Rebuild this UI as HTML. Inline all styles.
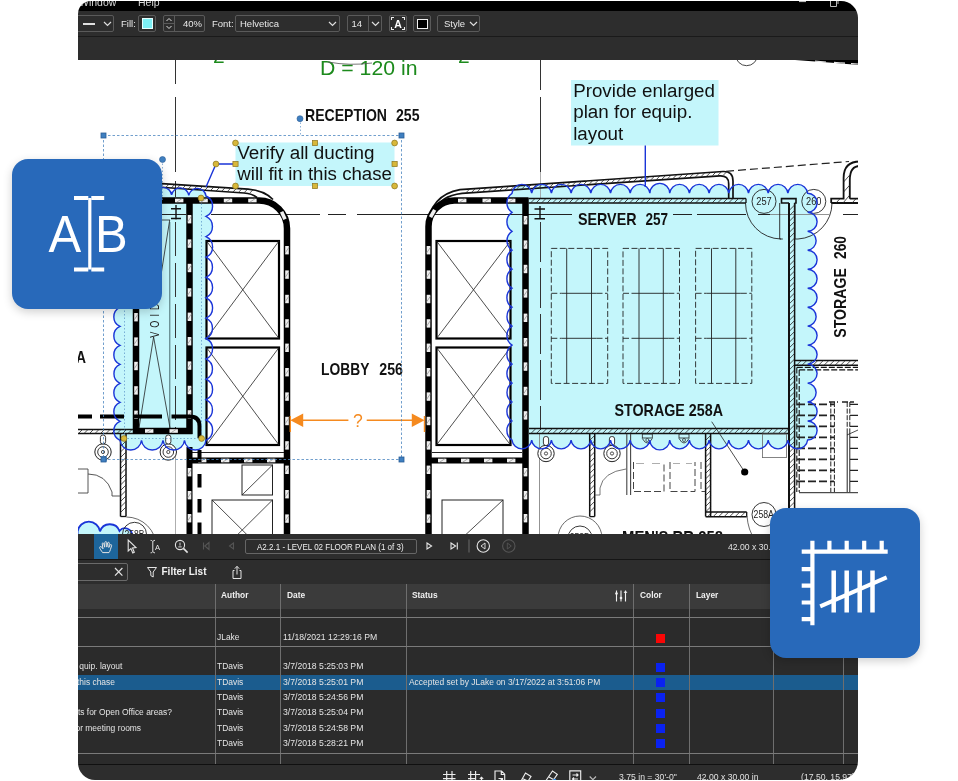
<!DOCTYPE html><html lang="en"><head><meta charset="utf-8"><title>Floor plan markup</title><style>
*{box-sizing:border-box;margin:0;padding:0}
html,body{width:958px;height:781px;background:#fff;overflow:hidden}
body{font-family:"Liberation Sans",sans-serif;position:relative;color:#e6e6e6}
#win{will-change:transform;position:absolute;left:78px;top:1px;width:780px;height:779px;overflow:hidden;border-radius:13px 17px 19px 17px;background:#fff}
#inner{position:absolute;left:0;top:-1px;width:780px;height:781px}
#drawing{position:absolute;left:-78px;top:0;width:958px;height:781px;font-family:"Liberation Sans",sans-serif}
.abs{position:absolute}
#titlebar{left:0;top:0;width:780px;height:11px;background:#000}
#tb1{left:0;top:11px;width:780px;height:25px;background:#2d2d2d}
#tbline{left:0;top:36px;width:780px;height:1px;background:#1a1a1a}
#tb2{left:0;top:37px;width:780px;height:23px;background:#2d2d2d}
.box{position:absolute;top:4px;height:17px;border:1px solid #5a5a5a;border-radius:2px}
.lbl{position:absolute;font-size:9.5px;line-height:12px;color:#e8e8e8;white-space:nowrap}
#nav{left:0;top:534px;width:780px;height:25px;background:#2d2d2d}
#navline{left:0;top:559px;width:780px;height:1px;background:#151515}
#flt{left:0;top:560px;width:780px;height:24px;background:#2d2d2d}
#tbl{left:0;top:584px;width:780px;height:180px;background:#2b2b2b}
#thead{left:0;top:0;width:780px;height:25px;background:#3b3b3b}
.hl{position:absolute;left:0;width:780px;height:1px;background:#7a7a7a}
.vl{position:absolute;top:0;width:1px;height:180px;background:#6e6e6e}
.th{position:absolute;top:6px;font-size:9px;font-weight:bold;color:#f0f0f0;line-height:11px;transform:scaleX(.93);transform-origin:0 0}
.td{position:absolute;font-size:8.9px;color:#e4e4e4;line-height:11px;white-space:nowrap;transform:scaleX(.95);transform-origin:0 0}
.tdr{transform-origin:100% 0}
.sq{position:absolute;left:578px;width:9px;height:9px;background:#0a22f0}
#selrow{left:0;top:91px;width:780px;height:15px;background:#1b5c8e}
#status{left:0;top:764px;width:780px;height:17px;background:#2d2d2d;border-top:1px solid #101010}
.card{position:absolute;width:150px;height:150px;border-radius:16px;background:#2869ba;box-shadow:0 3px 10px rgba(0,0,0,.19)}
</style></head><body>
<div id="win"><div id="inner">
<svg id="drawing" viewBox="0 0 958 781" width="958" height="781"><path d="M120.0 193.5A8.7 8.7 0 0 1 137.2 194.0A8.7 8.7 0 0 1 154.4 194.5A8.7 8.7 0 0 1 171.6 195.0A8.7 8.7 0 0 1 188.8 195.5A8.7 8.7 0 0 1 206.0 196.0A11.2 11.2 0 0 1 206.0 216.4A11.2 11.2 0 0 1 206.0 236.7A11.2 11.2 0 0 1 206.0 257.1A11.2 11.2 0 0 1 206.0 277.4A11.2 11.2 0 0 1 206.0 297.8A11.2 11.2 0 0 1 206.0 318.2A11.2 11.2 0 0 1 206.0 338.5A11.2 11.2 0 0 1 206.0 358.9A11.2 11.2 0 0 1 206.0 379.2A11.2 11.2 0 0 1 206.0 399.6A11.2 11.2 0 0 1 206.0 419.9A11.2 11.2 0 0 1 206.0 440.3A10.8 10.8 0 0 1 184.5 440.3A10.8 10.8 0 0 1 163.0 440.3A10.8 10.8 0 0 1 141.5 440.3A10.8 10.8 0 0 1 120.0 440.3A10.4 10.4 0 0 1 120.0 421.3A10.4 10.4 0 0 1 120.0 402.3A10.4 10.4 0 0 1 120.0 383.3A10.4 10.4 0 0 1 120.0 364.4A10.4 10.4 0 0 1 120.0 345.4A10.4 10.4 0 0 1 120.0 326.4A10.4 10.4 0 0 1 120.0 307.4A10.4 10.4 0 0 1 120.0 288.4A10.4 10.4 0 0 1 120.0 269.4A10.4 10.4 0 0 1 120.0 250.5A10.4 10.4 0 0 1 120.0 231.5A10.4 10.4 0 0 1 120.0 212.5A10.4 10.4 0 0 1 120.0 193.5Z" fill="#c4f6fb"/>
<path d="M512.0 193.3A9.9 9.9 0 0 1 531.7 193.3A9.9 9.9 0 0 1 551.4 193.3A9.9 9.9 0 0 1 571.1 193.3A9.9 9.9 0 0 1 590.8 193.3A9.9 9.9 0 0 1 610.5 193.3A9.9 9.9 0 0 1 630.2 193.3A9.9 9.9 0 0 1 649.9 193.3A9.9 9.9 0 0 1 669.7 193.3A9.9 9.9 0 0 1 689.4 193.3A9.9 9.9 0 0 1 709.1 193.3A9.9 9.9 0 0 1 728.8 193.3A9.9 9.9 0 0 1 748.5 193.3A9.9 9.9 0 0 1 768.2 193.3A9.9 9.9 0 0 1 787.9 193.3A9.9 9.9 0 0 1 807.6 193.3A9.5 9.5 0 0 1 807.6 212.3A9.5 9.5 0 0 1 807.6 231.3A9.5 9.5 0 0 1 807.6 250.2A9.5 9.5 0 0 1 807.6 269.2A9.5 9.5 0 0 1 807.6 288.2A9.5 9.5 0 0 1 807.6 307.2A9.5 9.5 0 0 1 807.6 326.1A9.5 9.5 0 0 1 807.6 345.1A9.5 9.5 0 0 1 807.6 364.1A9.5 9.5 0 0 1 807.6 383.1A9.5 9.5 0 0 1 807.6 402.0A9.5 9.5 0 0 1 807.6 421.0A9.5 9.5 0 0 1 807.6 440.0A9.9 9.9 0 0 1 787.9 440.0A9.9 9.9 0 0 1 768.2 440.0A9.9 9.9 0 0 1 748.5 440.0A9.9 9.9 0 0 1 728.8 440.0A9.9 9.9 0 0 1 709.1 440.0A9.9 9.9 0 0 1 689.4 440.0A9.9 9.9 0 0 1 669.7 440.0A9.9 9.9 0 0 1 649.9 440.0A9.9 9.9 0 0 1 630.2 440.0A9.9 9.9 0 0 1 610.5 440.0A9.9 9.9 0 0 1 590.8 440.0A9.9 9.9 0 0 1 571.1 440.0A9.9 9.9 0 0 1 551.4 440.0A9.9 9.9 0 0 1 531.7 440.0A9.9 9.9 0 0 1 512.0 440.0A11.4 11.4 0 0 1 512.0 421.0A11.4 11.4 0 0 1 512.0 402.0A11.4 11.4 0 0 1 512.0 383.1A11.4 11.4 0 0 1 512.0 364.1A11.4 11.4 0 0 1 512.0 345.1A11.4 11.4 0 0 1 512.0 326.1A11.4 11.4 0 0 1 512.0 307.2A11.4 11.4 0 0 1 512.0 288.2A11.4 11.4 0 0 1 512.0 269.2A11.4 11.4 0 0 1 512.0 250.2A11.4 11.4 0 0 1 512.0 231.3A11.4 11.4 0 0 1 512.0 212.3A11.4 11.4 0 0 1 512.0 193.3Z" fill="#c4f6fb"/>
<path d="M77.6 531.5A11.3 11.3 0 0 1 100 531.5A10.3 10.3 0 0 1 119.5 531A7 7 0 0 1 132 536V545H77.6Z" fill="#c4f6fb" stroke="#1a35d8" stroke-width="1.8"/>
<rect x="235.5" y="142.5" width="159" height="43.5" fill="#c4f6fb"/>
<rect x="571" y="80" width="147.5" height="65.5" fill="#c4f6fb"/>
<path d="M175.5 60V84M175.5 97V172M175.5 181V197" stroke="#333" stroke-width="1"/>
<path d="M540.5 60V90M540.5 97V172" stroke="#333" stroke-width="1"/><path d="M540.5 172V198" stroke="#999" stroke-width="0.8"/>
<path d="M540.5 222V430" stroke="#333" stroke-width="1" stroke-dasharray="40 6"/><path d="M539.5 434V534" stroke="#777" stroke-width="0.8"/>
<path d="M175.5 222V430" stroke="#333" stroke-width="1" stroke-dasharray="34 7"/>
<path d="M169.8 222V428" stroke="#3a5a5e" stroke-width="0.9"/>
<path d="M175.5 455V534" stroke="#999" stroke-width="0.8"/>
<path d="M162 214.5H186M211 214.5H320M328 214.5H346M357 214.5H572M673 214.5H692M697 214.5H746M758 214.5H770M843 214.5H858" stroke="#222" stroke-width="1"/>
<path d="M770 214.5H829" stroke="#777" stroke-width="0.8"/>
<path d="M150 182.8L248 189.2Q264 190.5 273 199.5M150 186.5L244 193Q252 193.6 257 197.5" stroke="#111" stroke-width="1.7" fill="none"/>
<path d="M160.0 187.3L163.4 183.9M165.6 187.6L169.0 184.2M171.2 188.0L174.6 184.6M176.8 188.4L180.2 185.0M182.4 188.7L185.8 185.3M188.0 189.1L191.4 185.7M193.6 189.5L197.0 186.1M199.2 189.8L202.6 186.4M204.8 190.2L208.2 186.8M210.4 190.6L213.8 187.2M216.0 191.0L219.4 187.6M221.6 191.3L225.0 187.9M227.2 191.7L230.6 188.3M232.8 192.1L236.2 188.7M238.4 192.4L241.8 189.0M244.0 192.8L247.4 189.4M249.6 193.2L253.0 189.8" stroke="#222" stroke-width="0.8"/>
<path d="M150 200.5H259A28 28 0 0 1 287 228.5V534" stroke="#000" stroke-width="6.5" fill="none"/>
<path d="M189.5 200V434M133 431H192.5M136 250V434" stroke="#000" stroke-width="6.5" fill="none"/>
<rect x="175.0" y="198.7" width="8.4" height="3.6" fill="#efefef"/><path d="M176.5 202.3L181.9 198.7" stroke="#888" stroke-width="0.7"/><rect x="199.4" y="198.7" width="8.4" height="3.6" fill="#efefef"/><path d="M200.9 202.3L206.3 198.7" stroke="#888" stroke-width="0.7"/><rect x="223.8" y="198.7" width="8.4" height="3.6" fill="#efefef"/><path d="M225.3 202.3L230.7 198.7" stroke="#888" stroke-width="0.7"/><rect x="248.2" y="198.7" width="8.4" height="3.6" fill="#efefef"/><path d="M249.7 202.3L255.1 198.7" stroke="#888" stroke-width="0.7"/>
<rect x="285.2" y="246.0" width="3.6" height="8.4" fill="#efefef"/><path d="M285.2 252.9L288.8 247.5" stroke="#888" stroke-width="0.7"/><rect x="285.2" y="270.4" width="3.6" height="8.4" fill="#efefef"/><path d="M285.2 277.3L288.8 271.9" stroke="#888" stroke-width="0.7"/><rect x="285.2" y="294.8" width="3.6" height="8.4" fill="#efefef"/><path d="M285.2 301.7L288.8 296.3" stroke="#888" stroke-width="0.7"/><rect x="285.2" y="319.2" width="3.6" height="8.4" fill="#efefef"/><path d="M285.2 326.1L288.8 320.7" stroke="#888" stroke-width="0.7"/><rect x="285.2" y="343.6" width="3.6" height="8.4" fill="#efefef"/><path d="M285.2 350.5L288.8 345.1" stroke="#888" stroke-width="0.7"/><rect x="285.2" y="368.0" width="3.6" height="8.4" fill="#efefef"/><path d="M285.2 374.9L288.8 369.5" stroke="#888" stroke-width="0.7"/><rect x="285.2" y="392.4" width="3.6" height="8.4" fill="#efefef"/><path d="M285.2 399.3L288.8 393.9" stroke="#888" stroke-width="0.7"/><rect x="285.2" y="416.8" width="3.6" height="8.4" fill="#efefef"/><path d="M285.2 423.7L288.8 418.3" stroke="#888" stroke-width="0.7"/><rect x="285.2" y="441.2" width="3.6" height="8.4" fill="#efefef"/><path d="M285.2 448.1L288.8 442.7" stroke="#888" stroke-width="0.7"/><rect x="285.2" y="465.6" width="3.6" height="8.4" fill="#efefef"/><path d="M285.2 472.5L288.8 467.1" stroke="#888" stroke-width="0.7"/><rect x="285.2" y="490.0" width="3.6" height="8.4" fill="#efefef"/><path d="M285.2 496.9L288.8 491.5" stroke="#888" stroke-width="0.7"/><rect x="285.2" y="514.4" width="3.6" height="8.4" fill="#efefef"/><path d="M285.2 521.3L288.8 515.9" stroke="#888" stroke-width="0.7"/>
<rect x="281.5" y="211.3" width="3.6" height="8.4" fill="#efefef" transform="rotate(-24 283.3 215.5)"/>
<rect x="187.7" y="215.0" width="3.6" height="8.4" fill="#efefef"/><path d="M187.7 221.9L191.3 216.5" stroke="#888" stroke-width="0.7"/><rect x="187.7" y="239.4" width="3.6" height="8.4" fill="#efefef"/><path d="M187.7 246.3L191.3 240.9" stroke="#888" stroke-width="0.7"/><rect x="187.7" y="263.8" width="3.6" height="8.4" fill="#efefef"/><path d="M187.7 270.7L191.3 265.3" stroke="#888" stroke-width="0.7"/><rect x="187.7" y="288.2" width="3.6" height="8.4" fill="#efefef"/><path d="M187.7 295.1L191.3 289.7" stroke="#888" stroke-width="0.7"/><rect x="187.7" y="312.6" width="3.6" height="8.4" fill="#efefef"/><path d="M187.7 319.5L191.3 314.1" stroke="#888" stroke-width="0.7"/><rect x="187.7" y="337.0" width="3.6" height="8.4" fill="#efefef"/><path d="M187.7 343.9L191.3 338.5" stroke="#888" stroke-width="0.7"/><rect x="187.7" y="361.4" width="3.6" height="8.4" fill="#efefef"/><path d="M187.7 368.3L191.3 362.9" stroke="#888" stroke-width="0.7"/><rect x="187.7" y="385.8" width="3.6" height="8.4" fill="#efefef"/><path d="M187.7 392.7L191.3 387.3" stroke="#888" stroke-width="0.7"/><rect x="187.7" y="410.2" width="3.6" height="8.4" fill="#efefef"/><path d="M187.7 417.1L191.3 411.7" stroke="#888" stroke-width="0.7"/>
<rect x="134.2" y="313.0" width="3.6" height="8.4" fill="#efefef"/><path d="M134.2 319.9L137.8 314.5" stroke="#888" stroke-width="0.7"/><rect x="134.2" y="337.4" width="3.6" height="8.4" fill="#efefef"/><path d="M134.2 344.3L137.8 338.9" stroke="#888" stroke-width="0.7"/><rect x="134.2" y="361.8" width="3.6" height="8.4" fill="#efefef"/><path d="M134.2 368.7L137.8 363.3" stroke="#888" stroke-width="0.7"/><rect x="134.2" y="386.2" width="3.6" height="8.4" fill="#efefef"/><path d="M134.2 393.1L137.8 387.7" stroke="#888" stroke-width="0.7"/><rect x="134.2" y="410.6" width="3.6" height="8.4" fill="#efefef"/><path d="M134.2 417.5L137.8 412.1" stroke="#888" stroke-width="0.7"/>
<rect x="145.0" y="429.2" width="8.4" height="3.6" fill="#efefef"/><path d="M146.5 432.8L151.9 429.2" stroke="#888" stroke-width="0.7"/><rect x="169.5" y="429.2" width="8.4" height="3.6" fill="#efefef"/><path d="M171.0 432.8L176.4 429.2" stroke="#888" stroke-width="0.7"/>
<path d="M171 208.7H181M171 218.5H181M176 205V219.5" stroke="#111" stroke-width="1.4"/>
<path d="M139 428L153.6 337L170 428M169.7 220L161 275M162 220H170" stroke="#222" stroke-width="0.8" fill="none"/>
<text x="0" y="0" transform="translate(159 337.8) rotate(-90) scale(0.68 1)" font-size="13.5" letter-spacing="5.9" fill="#222">VOID</text>
<rect x="206.5" y="241" width="72.5" height="97.5" fill="#fff" stroke="#000" stroke-width="2.2"/><path d="M206.5 241L279 338.5M279 241L206.5 338.5" stroke="#222" stroke-width="0.8"/>
<rect x="206.5" y="347.5" width="72.5" height="97.5" fill="#fff" stroke="#000" stroke-width="2.2"/><path d="M206.5 347.5L279 445M279 347.5L206.5 445" stroke="#222" stroke-width="0.8"/>
<path d="M192 452.5H284" stroke="#222" stroke-width="1"/>
<path d="M187 460.5H290M189.5 447V534" stroke="#000" stroke-width="6" fill="none"/>
<rect x="198.0" y="458.7" width="8.4" height="3.6" fill="#efefef"/><path d="M199.5 462.3L204.9 458.7" stroke="#888" stroke-width="0.7"/><rect x="221.0" y="458.7" width="8.4" height="3.6" fill="#efefef"/><path d="M222.5 462.3L227.9 458.7" stroke="#888" stroke-width="0.7"/><rect x="244.0" y="458.7" width="8.4" height="3.6" fill="#efefef"/><path d="M245.5 462.3L250.9 458.7" stroke="#888" stroke-width="0.7"/><rect x="267.0" y="458.7" width="8.4" height="3.6" fill="#efefef"/><path d="M268.5 462.3L273.9 458.7" stroke="#888" stroke-width="0.7"/>
<rect x="187.7" y="468.0" width="3.6" height="8.4" fill="#efefef"/><path d="M187.7 474.9L191.3 469.5" stroke="#888" stroke-width="0.7"/><rect x="187.7" y="491.0" width="3.6" height="8.4" fill="#efefef"/><path d="M187.7 497.9L191.3 492.5" stroke="#888" stroke-width="0.7"/><rect x="187.7" y="514.0" width="3.6" height="8.4" fill="#efefef"/><path d="M187.7 520.9L191.3 515.5" stroke="#888" stroke-width="0.7"/>
<rect x="242" y="465" width="30.5" height="30" fill="none" stroke="#222" stroke-width="1"/><path d="M242 495L272.5 465" stroke="#222" stroke-width="0.8"/>
<rect x="212" y="500" width="60.5" height="60" fill="none" stroke="#222" stroke-width="1"/><path d="M212 500L272.5 560M272.5 500L212 560" stroke="#222" stroke-width="0.8"/>
<path d="M60 416.5H92M100 416.5H124M133 416.5H162M171.5 416.5H190Q199.5 416.5 199.5 426V438" stroke="#000" stroke-width="4" fill="none"/>
<path d="M199.5 450V462M199.5 474V487.5M199.5 499V512.5M199.5 522.5V536" stroke="#000" stroke-width="4"/>
<path d="M60 429.5H133M60 433.5H133" stroke="#111" stroke-width="1.5" fill="none"/><path d="M62.0 433.5L66.0 429.5M67.5 433.5L71.5 429.5M73.0 433.5L77.0 429.5M78.5 433.5L82.5 429.5M84.0 433.5L88.0 429.5M89.5 433.5L93.5 429.5M95.0 433.5L99.0 429.5M100.5 433.5L104.5 429.5M106.0 433.5L110.0 429.5M111.5 433.5L115.5 429.5M117.0 433.5L121.0 429.5M122.5 433.5L126.5 429.5M128.0 433.5L132.0 429.5" stroke="#222" stroke-width="0.8" fill="none"/>
<path d="M120.5 433.5V516.5M126 433.5V516.5" stroke="#111" stroke-width="1.5" fill="none"/><path d="M120.5 441.0L126 435.5M120.5 446.5L126 441.0M120.5 452.0L126 446.5M120.5 457.5L126 452.0M120.5 463.0L126 457.5M120.5 468.5L126 463.0M120.5 474.0L126 468.5M120.5 479.5L126 474.0M120.5 485.0L126 479.5M120.5 490.5L126 485.0M120.5 496.0L126 490.5M120.5 501.5L126 496.0M120.5 507.0L126 501.5M120.5 512.5L126 507.0" stroke="#222" stroke-width="0.8" fill="none"/>
<path d="M120.5 516.5H126" stroke="#111" stroke-width="1.3"/>
<circle cx="103" cy="452" r="8.2" fill="#fff" stroke="#222" stroke-width="1"/><circle cx="103" cy="452" r="5.3" fill="none" stroke="#222" stroke-width="0.9"/><circle cx="103" cy="452" r="1.6" fill="none" stroke="#222" stroke-width="0.8"/><rect x="100.4" y="435" width="5.2" height="9" rx="2.4" fill="#fff" stroke="#222" stroke-width="0.9"/>
<circle cx="168.3" cy="452" r="8.2" fill="#fff" stroke="#222" stroke-width="1"/><circle cx="168.3" cy="452" r="5.3" fill="none" stroke="#222" stroke-width="0.9"/><circle cx="168.3" cy="452" r="1.6" fill="none" stroke="#222" stroke-width="0.8"/><rect x="165.70000000000002" y="435" width="5.2" height="9" rx="2.4" fill="#fff" stroke="#222" stroke-width="0.9"/>
<rect x="101.3" y="456.3" width="5.4" height="5.4" fill="#2d6fb8"/>
<path d="M78 469H88V493H78M88 474Q106 474 112 492M112 492V496H120" stroke="#444" stroke-width="0.9" fill="none"/>
<circle cx="134.5" cy="534.3" r="12" fill="none" stroke="#222" stroke-width="0.9"/><path d="M126.3 517A30 30 0 0 1 156.3 547" stroke="#444" stroke-width="0.8" fill="none"/>
<text x="134.5" y="538.3" font-size="10.5" text-anchor="middle" fill="#222" textLength="20" lengthAdjust="spacingAndGlyphs">258B</text>
<text x="76" y="363" font-size="17" font-weight="bold" fill="#111" textLength="10" lengthAdjust="spacingAndGlyphs">A</text>
<path d="M427 228Q430 195 460 189.7L723 171.5Q733 171 733 181V199M434 211Q440 196 462 193.3L720 175.8Q728.7 175.5 728.7 184V199" stroke="#111" stroke-width="1.7" fill="none"/>
<path d="M466.0 192.7L469.6 189.1M471.6 192.3L475.2 188.7M477.2 191.9L480.8 188.3M482.8 191.5L486.4 187.9M488.4 191.1L492.0 187.5M494.0 190.7L497.6 187.1M499.6 190.4L503.2 186.8M505.2 190.0L508.8 186.4M510.8 189.6L514.4 186.0M516.4 189.2L520.0 185.6M522.0 188.8L525.6 185.2M527.6 188.4L531.2 184.8M533.2 188.0L536.8 184.4M538.8 187.6L542.4 184.0M544.4 187.3L548.0 183.7M550.0 186.9L553.6 183.3M555.6 186.5L559.2 182.9M561.2 186.1L564.8 182.5M566.8 185.7L570.4 182.1M572.4 185.3L576.0 181.7M578.0 184.9L581.6 181.3M583.6 184.5L587.2 180.9M589.2 184.2L592.8 180.6M594.8 183.8L598.4 180.2M600.4 183.4L604.0 179.8M606.0 183.0L609.6 179.4M611.6 182.6L615.2 179.0M617.2 182.2L620.8 178.6M622.8 181.8L626.4 178.2M628.4 181.4L632.0 177.8M634.0 181.1L637.6 177.5M639.6 180.7L643.2 177.1M645.2 180.3L648.8 176.7M650.8 179.9L654.4 176.3M656.4 179.5L660.0 175.9M662.0 179.1L665.6 175.5M667.6 178.7L671.2 175.1M673.2 178.3L676.8 174.7M678.8 178.0L682.4 174.4M684.4 177.6L688.0 174.0M690.0 177.2L693.6 173.6M695.6 176.8L699.2 173.2M701.2 176.4L704.8 172.8M706.8 176.0L710.4 172.4M712.4 175.6L716.0 172.0M718.0 175.2L721.6 171.6M723.6 174.9L727.2 171.3" stroke="#222" stroke-width="0.8"/>
<path d="M726 171.3L849 161.5" stroke="#222" stroke-width="1.2" stroke-dasharray="8 4"/>
<path d="M428.5 534V226.5A26 26 0 0 1 454.5 200.5H528.5M525.5 198V534" stroke="#000" stroke-width="6.5" fill="none"/>
<rect x="458.0" y="198.7" width="8.4" height="3.6" fill="#efefef"/><path d="M459.5 202.3L464.9 198.7" stroke="#888" stroke-width="0.7"/><rect x="482.5" y="198.7" width="8.4" height="3.6" fill="#efefef"/><path d="M484.0 202.3L489.4 198.7" stroke="#888" stroke-width="0.7"/><rect x="507.0" y="198.7" width="8.4" height="3.6" fill="#efefef"/><path d="M508.5 202.3L513.9 198.7" stroke="#888" stroke-width="0.7"/>
<rect x="426.7" y="246.0" width="3.6" height="8.4" fill="#efefef"/><path d="M426.7 252.9L430.3 247.5" stroke="#888" stroke-width="0.7"/><rect x="426.7" y="270.4" width="3.6" height="8.4" fill="#efefef"/><path d="M426.7 277.3L430.3 271.9" stroke="#888" stroke-width="0.7"/><rect x="426.7" y="294.8" width="3.6" height="8.4" fill="#efefef"/><path d="M426.7 301.7L430.3 296.3" stroke="#888" stroke-width="0.7"/><rect x="426.7" y="319.2" width="3.6" height="8.4" fill="#efefef"/><path d="M426.7 326.1L430.3 320.7" stroke="#888" stroke-width="0.7"/><rect x="426.7" y="343.6" width="3.6" height="8.4" fill="#efefef"/><path d="M426.7 350.5L430.3 345.1" stroke="#888" stroke-width="0.7"/><rect x="426.7" y="368.0" width="3.6" height="8.4" fill="#efefef"/><path d="M426.7 374.9L430.3 369.5" stroke="#888" stroke-width="0.7"/><rect x="426.7" y="392.4" width="3.6" height="8.4" fill="#efefef"/><path d="M426.7 399.3L430.3 393.9" stroke="#888" stroke-width="0.7"/><rect x="426.7" y="416.8" width="3.6" height="8.4" fill="#efefef"/><path d="M426.7 423.7L430.3 418.3" stroke="#888" stroke-width="0.7"/><rect x="426.7" y="441.2" width="3.6" height="8.4" fill="#efefef"/><path d="M426.7 448.1L430.3 442.7" stroke="#888" stroke-width="0.7"/><rect x="426.7" y="465.6" width="3.6" height="8.4" fill="#efefef"/><path d="M426.7 472.5L430.3 467.1" stroke="#888" stroke-width="0.7"/><rect x="426.7" y="490.0" width="3.6" height="8.4" fill="#efefef"/><path d="M426.7 496.9L430.3 491.5" stroke="#888" stroke-width="0.7"/><rect x="426.7" y="514.4" width="3.6" height="8.4" fill="#efefef"/><path d="M426.7 521.3L430.3 515.9" stroke="#888" stroke-width="0.7"/>
<rect x="431" y="209" width="3.6" height="8.4" fill="#efefef" transform="rotate(30 432 213)"/>
<rect x="523.7" y="216.0" width="3.6" height="8.4" fill="#efefef"/><path d="M523.7 222.9L527.3 217.5" stroke="#888" stroke-width="0.7"/><rect x="523.7" y="240.4" width="3.6" height="8.4" fill="#efefef"/><path d="M523.7 247.3L527.3 241.9" stroke="#888" stroke-width="0.7"/><rect x="523.7" y="264.8" width="3.6" height="8.4" fill="#efefef"/><path d="M523.7 271.7L527.3 266.3" stroke="#888" stroke-width="0.7"/><rect x="523.7" y="289.2" width="3.6" height="8.4" fill="#efefef"/><path d="M523.7 296.1L527.3 290.7" stroke="#888" stroke-width="0.7"/><rect x="523.7" y="313.6" width="3.6" height="8.4" fill="#efefef"/><path d="M523.7 320.5L527.3 315.1" stroke="#888" stroke-width="0.7"/><rect x="523.7" y="338.0" width="3.6" height="8.4" fill="#efefef"/><path d="M523.7 344.9L527.3 339.5" stroke="#888" stroke-width="0.7"/><rect x="523.7" y="362.4" width="3.6" height="8.4" fill="#efefef"/><path d="M523.7 369.3L527.3 363.9" stroke="#888" stroke-width="0.7"/><rect x="523.7" y="386.8" width="3.6" height="8.4" fill="#efefef"/><path d="M523.7 393.7L527.3 388.3" stroke="#888" stroke-width="0.7"/><rect x="523.7" y="411.2" width="3.6" height="8.4" fill="#efefef"/><path d="M523.7 418.1L527.3 412.7" stroke="#888" stroke-width="0.7"/>
<rect x="523.7" y="468.0" width="3.6" height="8.4" fill="#efefef"/><path d="M523.7 474.9L527.3 469.5" stroke="#888" stroke-width="0.7"/><rect x="523.7" y="491.0" width="3.6" height="8.4" fill="#efefef"/><path d="M523.7 497.9L527.3 492.5" stroke="#888" stroke-width="0.7"/><rect x="523.7" y="514.0" width="3.6" height="8.4" fill="#efefef"/><path d="M523.7 520.9L527.3 515.5" stroke="#888" stroke-width="0.7"/>
<rect x="436.5" y="241" width="74.0" height="97.5" fill="#fff" stroke="#000" stroke-width="2.2"/><path d="M436.5 241L510.5 338.5M510.5 241L436.5 338.5" stroke="#222" stroke-width="0.8"/>
<rect x="436.5" y="347.5" width="74.0" height="97.5" fill="#fff" stroke="#000" stroke-width="2.2"/><path d="M436.5 347.5L510.5 445M510.5 347.5L436.5 445" stroke="#222" stroke-width="0.8"/>
<path d="M432 452.5H522" stroke="#222" stroke-width="1"/>
<path d="M426 460.5H528" stroke="#000" stroke-width="6" fill="none"/>
<rect x="438.0" y="458.7" width="8.4" height="3.6" fill="#efefef"/><path d="M439.5 462.3L444.9 458.7" stroke="#888" stroke-width="0.7"/><rect x="461.0" y="458.7" width="8.4" height="3.6" fill="#efefef"/><path d="M462.5 462.3L467.9 458.7" stroke="#888" stroke-width="0.7"/><rect x="484.0" y="458.7" width="8.4" height="3.6" fill="#efefef"/><path d="M485.5 462.3L490.9 458.7" stroke="#888" stroke-width="0.7"/><rect x="507.0" y="458.7" width="8.4" height="3.6" fill="#efefef"/><path d="M508.5 462.3L513.9 458.7" stroke="#888" stroke-width="0.7"/>
<rect x="442" y="500" width="61" height="60" fill="none" stroke="#222" stroke-width="1"/><path d="M503 500L460 540" stroke="#222" stroke-width="0.8"/>
<path d="M528.5 198.6H746M528.5 203H746" stroke="#111" stroke-width="1.5" fill="none"/><path d="M530.5 203L534.9 198.6M536.0 203L540.4 198.6M541.5 203L545.9 198.6M547.0 203L551.4 198.6M552.5 203L556.9 198.6M558.0 203L562.4 198.6M563.5 203L567.9 198.6M569.0 203L573.4 198.6M574.5 203L578.9 198.6M580.0 203L584.4 198.6M585.5 203L589.9 198.6M591.0 203L595.4 198.6M596.5 203L600.9 198.6M602.0 203L606.4 198.6M607.5 203L611.9 198.6M613.0 203L617.4 198.6M618.5 203L622.9 198.6M624.0 203L628.4 198.6M629.5 203L633.9 198.6M635.0 203L639.4 198.6M640.5 203L644.9 198.6M646.0 203L650.4 198.6M651.5 203L655.9 198.6M657.0 203L661.4 198.6M662.5 203L666.9 198.6M668.0 203L672.4 198.6M673.5 203L677.9 198.6M679.0 203L683.4 198.6M684.5 203L688.9 198.6M690.0 203L694.4 198.6M695.5 203L699.9 198.6M701.0 203L705.4 198.6M706.5 203L710.9 198.6M712.0 203L716.4 198.6M717.5 203L721.9 198.6M723.0 203L727.4 198.6M728.5 203L732.9 198.6M734.0 203L738.4 198.6M739.5 203L743.9 198.6" stroke="#222" stroke-width="0.8" fill="none"/>
<path d="M746 198.6V203" stroke="#111" stroke-width="1.3"/>
<path d="M529 428.6H789M529 433.4H789" stroke="#111" stroke-width="1.5" fill="none"/><path d="M531.0 433.4L535.8 428.6M536.5 433.4L541.3 428.6M542.0 433.4L546.8 428.6M547.5 433.4L552.3 428.6M553.0 433.4L557.8 428.6M558.5 433.4L563.3 428.6M564.0 433.4L568.8 428.6M569.5 433.4L574.3 428.6M575.0 433.4L579.8 428.6M580.5 433.4L585.3 428.6M586.0 433.4L590.8 428.6M591.5 433.4L596.3 428.6M597.0 433.4L601.8 428.6M602.5 433.4L607.3 428.6M608.0 433.4L612.8 428.6M613.5 433.4L618.3 428.6M619.0 433.4L623.8 428.6M624.5 433.4L629.3 428.6M630.0 433.4L634.8 428.6M635.5 433.4L640.3 428.6M641.0 433.4L645.8 428.6M646.5 433.4L651.3 428.6M652.0 433.4L656.8 428.6M657.5 433.4L662.3 428.6M663.0 433.4L667.8 428.6M668.5 433.4L673.3 428.6M674.0 433.4L678.8 428.6M679.5 433.4L684.3 428.6M685.0 433.4L689.8 428.6M690.5 433.4L695.3 428.6M696.0 433.4L700.8 428.6M701.5 433.4L706.3 428.6M707.0 433.4L711.8 428.6M712.5 433.4L717.3 428.6M718.0 433.4L722.8 428.6M723.5 433.4L728.3 428.6M729.0 433.4L733.8 428.6M734.5 433.4L739.3 428.6M740.0 433.4L744.8 428.6M745.5 433.4L750.3 428.6M751.0 433.4L755.8 428.6M756.5 433.4L761.3 428.6M762.0 433.4L766.8 428.6M767.5 433.4L772.3 428.6M773.0 433.4L777.8 428.6M778.5 433.4L783.3 428.6M784.0 433.4L788.8 428.6" stroke="#222" stroke-width="0.8" fill="none"/>
<path d="M789 203V520M794.6 203V520" stroke="#111" stroke-width="1.5" fill="none"/><path d="M789 210.6L794.6 205.0M789 216.1L794.6 210.5M789 221.6L794.6 216.0M789 227.1L794.6 221.5M789 232.6L794.6 227.0M789 238.1L794.6 232.5M789 243.6L794.6 238.0M789 249.1L794.6 243.5M789 254.6L794.6 249.0M789 260.1L794.6 254.5M789 265.6L794.6 260.0M789 271.1L794.6 265.5M789 276.6L794.6 271.0M789 282.1L794.6 276.5M789 287.6L794.6 282.0M789 293.1L794.6 287.5M789 298.6L794.6 293.0M789 304.1L794.6 298.5M789 309.6L794.6 304.0M789 315.1L794.6 309.5M789 320.6L794.6 315.0M789 326.1L794.6 320.5M789 331.6L794.6 326.0M789 337.1L794.6 331.5M789 342.6L794.6 337.0M789 348.1L794.6 342.5M789 353.6L794.6 348.0M789 359.1L794.6 353.5M789 364.6L794.6 359.0M789 370.1L794.6 364.5M789 375.6L794.6 370.0M789 381.1L794.6 375.5M789 386.6L794.6 381.0M789 392.1L794.6 386.5M789 397.6L794.6 392.0M789 403.1L794.6 397.5M789 408.6L794.6 403.0M789 414.1L794.6 408.5M789 419.6L794.6 414.0M789 425.1L794.6 419.5M789 430.6L794.6 425.0M789 436.1L794.6 430.5M789 441.6L794.6 436.0M789 447.1L794.6 441.5M789 452.6L794.6 447.0M789 458.1L794.6 452.5M789 463.6L794.6 458.0M789 469.1L794.6 463.5M789 474.6L794.6 469.0M789 480.1L794.6 474.5M789 485.6L794.6 480.0M789 491.1L794.6 485.5M789 496.6L794.6 491.0M789 502.1L794.6 496.5M789 507.6L794.6 502.0M789 513.1L794.6 507.5M789 518.6L794.6 513.0" stroke="#222" stroke-width="0.8" fill="none"/>
<path d="M789 203V520" stroke="#111" stroke-width="2"/>
<path d="M789 203H781.5V198.6H796V203H794.6" fill="none" stroke="#111" stroke-width="1.6"/>
<path d="M794.6 360.4H860M794.6 365.2H860" stroke="#111" stroke-width="1.5" fill="none"/><path d="M796.6 365.2L801.4 360.4M802.1 365.2L806.9 360.4M807.6 365.2L812.4 360.4M813.1 365.2L817.9 360.4M818.6 365.2L823.4 360.4M824.1 365.2L828.9 360.4M829.6 365.2L834.4 360.4M835.1 365.2L839.9 360.4M840.6 365.2L845.4 360.4M846.1 365.2L850.9 360.4M851.6 365.2L856.4 360.4" stroke="#222" stroke-width="0.8" fill="none"/>
<path d="M831.2 203V198.7H843.6V178Q843.6 161.5 860 161.5M831.2 203H860M849.8 198.7V180Q849.8 166 860 166M849.8 198.7H860" stroke="#111" stroke-width="1.8" fill="none"/>
<path d="M836 203L840 198.7M843 203L849.8 195M843.6 192L849.8 185M843.6 182L849.8 175M852 203L856 198.7" stroke="#222" stroke-width="0.8"/>
<path d="M589.7 433.4V516.6M594.7 433.4V516.6" stroke="#111" stroke-width="1.5" fill="none"/><path d="M589.7 440.4L594.7 435.4M589.7 445.9L594.7 440.9M589.7 451.4L594.7 446.4M589.7 456.9L594.7 451.9M589.7 462.4L594.7 457.4M589.7 467.9L594.7 462.9M589.7 473.4L594.7 468.4M589.7 478.9L594.7 473.9M589.7 484.4L594.7 479.4M589.7 489.9L594.7 484.9M589.7 495.4L594.7 490.4M589.7 500.9L594.7 495.9M589.7 506.4L594.7 501.4M589.7 511.9L594.7 506.9" stroke="#222" stroke-width="0.8" fill="none"/>
<path d="M589.7 516.6H594.7" stroke="#111" stroke-width="1.3"/>
<path d="M705.6 433.4V516.6M710.6 433.4V516.6" stroke="#111" stroke-width="1.5" fill="none"/><path d="M705.6 440.4L710.6 435.4M705.6 445.9L710.6 440.9M705.6 451.4L710.6 446.4M705.6 456.9L710.6 451.9M705.6 462.4L710.6 457.4M705.6 467.9L710.6 462.9M705.6 473.4L710.6 468.4M705.6 478.9L710.6 473.9M705.6 484.4L710.6 479.4M705.6 489.9L710.6 484.9M705.6 495.4L710.6 490.4M705.6 500.9L710.6 495.9M705.6 506.4L710.6 501.4M705.6 511.9L710.6 506.9" stroke="#222" stroke-width="0.8" fill="none"/>
<path d="M705.6 512H746.7M705.6 516.7H746.7" stroke="#111" stroke-width="1.5" fill="none"/><path d="M707.6 516.7L712.3 512M713.1 516.7L717.8 512M718.6 516.7L723.3 512M724.1 516.7L728.8 512M729.6 516.7L734.3 512M735.1 516.7L739.8 512M740.6 516.7L745.3 512" stroke="#222" stroke-width="0.8" fill="none"/>
<path d="M746.7 512V516.7" stroke="#111" stroke-width="1.3"/>
<path d="M534.5 209H545M534.5 218.7H545M540 206V219.5" stroke="#111" stroke-width="1.4"/>
<path d="M745.5 203A36 36 0 0 0 781 239M779.7 203V239H782.8M795 203V239H798M798 239A36 36 0 0 0 832 203" stroke="#222" stroke-width="0.9" fill="none"/>
<circle cx="764" cy="201.4" r="12" fill="none" stroke="#222" stroke-width="0.9"/><circle cx="813.8" cy="201.4" r="12" fill="none" stroke="#222" stroke-width="0.9"/>
<text x="764" y="205.3" font-size="10.5" text-anchor="middle" fill="#222" textLength="15.5" lengthAdjust="spacingAndGlyphs">257</text>
<text x="813.8" y="205.3" font-size="10.5" text-anchor="middle" fill="#222" textLength="15.5" lengthAdjust="spacingAndGlyphs">260</text>
<rect x="551.3" y="248.4" width="56.4" height="135" fill="none" stroke="#222" stroke-width="0.9" stroke-dasharray="6 2.5"/>
<path d="M566.7 248.4V383.4M591.5 248.4V383.4" stroke="#222" stroke-width="0.9"/>
<path d="M551.3 293.3H561.7M596.5 293.3H607.7M551.3 338.3H561.7M596.5 338.3H607.7" stroke="#222" stroke-width="0.9" stroke-dasharray="6 2.5"/>
<path d="M561.7 293.3H596.5M561.7 338.3H596.5" stroke="#222" stroke-width="0.9"/>
<rect x="623" y="248.4" width="56.5" height="135" fill="none" stroke="#222" stroke-width="0.9" stroke-dasharray="6 2.5"/>
<path d="M639 248.4V383.4M663.3 248.4V383.4" stroke="#222" stroke-width="0.9"/>
<path d="M623 293.3H634M668.3 293.3H679.5M623 338.3H634M668.3 338.3H679.5" stroke="#222" stroke-width="0.9" stroke-dasharray="6 2.5"/>
<path d="M634 293.3H668.3M634 338.3H668.3" stroke="#222" stroke-width="0.9"/>
<rect x="695.6" y="248.4" width="56.2" height="135" fill="none" stroke="#222" stroke-width="0.9" stroke-dasharray="6 2.5"/>
<path d="M711.5 248.4V383.4M735.8 248.4V383.4" stroke="#222" stroke-width="0.9"/>
<path d="M695.6 293.3H706.5M740.8 293.3H751.8M695.6 338.3H706.5M740.8 338.3H751.8" stroke="#222" stroke-width="0.9" stroke-dasharray="6 2.5"/>
<path d="M706.5 293.3H740.8M706.5 338.3H740.8" stroke="#222" stroke-width="0.9"/>
<path d="M796.8 367.4H860M799.2 369.9H860M796.8 367.4V492M799.2 369.9V492" stroke="#111" stroke-width="1.1" stroke-dasharray="6 2" fill="none"/>
<path d="M797 404.3H834M797 415.3H834M797 426.3H834M797 437.3H834M797 448.3H834M797 459.3H834M797 470.3H834M797 481.3H834" stroke="#222" stroke-width="1.7" stroke-dasharray="8 3"/>
<path d="M799 492.7H860" stroke="#222" stroke-width="1"/>
<path d="M830.8 402V492M834.4 402V492M847.2 402V432M849.8 402V432" stroke="#222" stroke-width="1" stroke-dasharray="5 1.6"/><path d="M847.2 432V492M849.8 432V492" stroke="#222" stroke-width="1"/>
<path d="M829 402H838M842 402H854" stroke="#222" stroke-width="1.3" stroke-dasharray="6 2"/>
<path d="M850 404.3H858M850 415.3H858M850 426.3H858M850 437.3H858M850 448.3H858M850 459.3H858M850 470.3H858M850 481.3H858" stroke="#222" stroke-width="1.2"/>
<path d="M847 435L858 430" stroke="#222" stroke-width="0.8"/>
<circle cx="546" cy="453.5" r="8.2" fill="#fff" stroke="#222" stroke-width="1"/><circle cx="546" cy="453.5" r="5.3" fill="none" stroke="#222" stroke-width="0.9"/><circle cx="546" cy="453.5" r="1.6" fill="none" stroke="#222" stroke-width="0.8"/><rect x="543.4" y="436.5" width="5.2" height="9" rx="2.4" fill="#fff" stroke="#222" stroke-width="0.9"/>
<circle cx="612" cy="453.5" r="8.2" fill="#fff" stroke="#222" stroke-width="1"/><circle cx="612" cy="453.5" r="5.3" fill="none" stroke="#222" stroke-width="0.9"/><circle cx="612" cy="453.5" r="1.6" fill="none" stroke="#222" stroke-width="0.8"/><rect x="609.4" y="436.5" width="5.2" height="9" rx="2.4" fill="#fff" stroke="#222" stroke-width="0.9"/>
<rect x="642.3" y="434.0" width="10" height="4" fill="none" stroke="#222" stroke-width="0.8"/><path d="M642.3 438.5Q647.3 447.5 652.3 438.5" fill="none" stroke="#222" stroke-width="0.8"/><circle cx="647.3" cy="440.0" r="1.5" fill="none" stroke="#222" stroke-width="0.7"/>
<rect x="679" y="434.0" width="10" height="4" fill="none" stroke="#222" stroke-width="0.8"/><path d="M679 438.5Q684 447.5 689 438.5" fill="none" stroke="#222" stroke-width="0.8"/><circle cx="684" cy="440.0" r="1.5" fill="none" stroke="#222" stroke-width="0.7"/>
<path d="M626.8 434V495M630.6 434V495" stroke="#444" stroke-width="1.1" fill="none"/>
<path d="M595 495H600V488Q603 472 626 469" stroke="#555" stroke-width="0.8" fill="none"/>
<path d="M633.5 462V491.5H664V462M670 462V491.5H695V462M701 462V491.5H705" stroke="#444" stroke-width="1" stroke-dasharray="7 3" fill="none"/>
<path d="M636 463.5H644M652 463.5H660M673 463.5H680M686 463.5H692" stroke="#999" stroke-width="0.8"/>
<rect x="762.6" y="434" width="24" height="23.6" fill="none" stroke="#666" stroke-width="0.8"/>
<path d="M711.7 421.7L744.7 472" stroke="#222" stroke-width="0.8"/><circle cx="744.7" cy="472" r="3.6" fill="#000"/>
<circle cx="764" cy="514.5" r="12" fill="#fff" stroke="#222" stroke-width="0.9"/>
<text x="763.7" y="518.3" font-size="10.7" text-anchor="middle" fill="#222" textLength="20.3" lengthAdjust="spacingAndGlyphs">258A</text>
<path d="M747 516Q748 530 755 540" stroke="#444" stroke-width="0.8" fill="none"/>
<circle cx="580" cy="538" r="12" fill="none" stroke="#222" stroke-width="0.9"/><path d="M558 538A22 22 0 0 1 602 538" stroke="#444" stroke-width="0.8" fill="none"/>
<text x="579.7" y="541" font-size="10.5" text-anchor="middle" fill="#222" textLength="20" lengthAdjust="spacingAndGlyphs">258B</text>
<path d="M120.0 193.5A8.7 8.7 0 0 1 137.2 194.0A8.7 8.7 0 0 1 154.4 194.5A8.7 8.7 0 0 1 171.6 195.0A8.7 8.7 0 0 1 188.8 195.5A8.7 8.7 0 0 1 206.0 196.0A11.2 11.2 0 0 1 206.0 216.4A11.2 11.2 0 0 1 206.0 236.7A11.2 11.2 0 0 1 206.0 257.1A11.2 11.2 0 0 1 206.0 277.4A11.2 11.2 0 0 1 206.0 297.8A11.2 11.2 0 0 1 206.0 318.2A11.2 11.2 0 0 1 206.0 338.5A11.2 11.2 0 0 1 206.0 358.9A11.2 11.2 0 0 1 206.0 379.2A11.2 11.2 0 0 1 206.0 399.6A11.2 11.2 0 0 1 206.0 419.9A11.2 11.2 0 0 1 206.0 440.3A10.8 10.8 0 0 1 184.5 440.3A10.8 10.8 0 0 1 163.0 440.3A10.8 10.8 0 0 1 141.5 440.3A10.8 10.8 0 0 1 120.0 440.3A10.4 10.4 0 0 1 120.0 421.3A10.4 10.4 0 0 1 120.0 402.3A10.4 10.4 0 0 1 120.0 383.3A10.4 10.4 0 0 1 120.0 364.4A10.4 10.4 0 0 1 120.0 345.4A10.4 10.4 0 0 1 120.0 326.4A10.4 10.4 0 0 1 120.0 307.4A10.4 10.4 0 0 1 120.0 288.4A10.4 10.4 0 0 1 120.0 269.4A10.4 10.4 0 0 1 120.0 250.5A10.4 10.4 0 0 1 120.0 231.5A10.4 10.4 0 0 1 120.0 212.5A10.4 10.4 0 0 1 120.0 193.5Z" fill="none" stroke="#1a35d8" stroke-width="1.4"/>
<path d="M512.0 193.3A9.9 9.9 0 0 1 531.7 193.3A9.9 9.9 0 0 1 551.4 193.3A9.9 9.9 0 0 1 571.1 193.3A9.9 9.9 0 0 1 590.8 193.3A9.9 9.9 0 0 1 610.5 193.3A9.9 9.9 0 0 1 630.2 193.3A9.9 9.9 0 0 1 649.9 193.3A9.9 9.9 0 0 1 669.7 193.3A9.9 9.9 0 0 1 689.4 193.3A9.9 9.9 0 0 1 709.1 193.3A9.9 9.9 0 0 1 728.8 193.3A9.9 9.9 0 0 1 748.5 193.3A9.9 9.9 0 0 1 768.2 193.3A9.9 9.9 0 0 1 787.9 193.3A9.9 9.9 0 0 1 807.6 193.3A9.5 9.5 0 0 1 807.6 212.3A9.5 9.5 0 0 1 807.6 231.3A9.5 9.5 0 0 1 807.6 250.2A9.5 9.5 0 0 1 807.6 269.2A9.5 9.5 0 0 1 807.6 288.2A9.5 9.5 0 0 1 807.6 307.2A9.5 9.5 0 0 1 807.6 326.1A9.5 9.5 0 0 1 807.6 345.1A9.5 9.5 0 0 1 807.6 364.1A9.5 9.5 0 0 1 807.6 383.1A9.5 9.5 0 0 1 807.6 402.0A9.5 9.5 0 0 1 807.6 421.0A9.5 9.5 0 0 1 807.6 440.0A9.9 9.9 0 0 1 787.9 440.0A9.9 9.9 0 0 1 768.2 440.0A9.9 9.9 0 0 1 748.5 440.0A9.9 9.9 0 0 1 728.8 440.0A9.9 9.9 0 0 1 709.1 440.0A9.9 9.9 0 0 1 689.4 440.0A9.9 9.9 0 0 1 669.7 440.0A9.9 9.9 0 0 1 649.9 440.0A9.9 9.9 0 0 1 630.2 440.0A9.9 9.9 0 0 1 610.5 440.0A9.9 9.9 0 0 1 590.8 440.0A9.9 9.9 0 0 1 571.1 440.0A9.9 9.9 0 0 1 551.4 440.0A9.9 9.9 0 0 1 531.7 440.0A9.9 9.9 0 0 1 512.0 440.0A11.4 11.4 0 0 1 512.0 421.0A11.4 11.4 0 0 1 512.0 402.0A11.4 11.4 0 0 1 512.0 383.1A11.4 11.4 0 0 1 512.0 364.1A11.4 11.4 0 0 1 512.0 345.1A11.4 11.4 0 0 1 512.0 326.1A11.4 11.4 0 0 1 512.0 307.2A11.4 11.4 0 0 1 512.0 288.2A11.4 11.4 0 0 1 512.0 269.2A11.4 11.4 0 0 1 512.0 250.2A11.4 11.4 0 0 1 512.0 231.3A11.4 11.4 0 0 1 512.0 212.3A11.4 11.4 0 0 1 512.0 193.3Z" fill="none" stroke="#1a35d8" stroke-width="1.4"/>
<path d="M645.3 145.5V187" stroke="#1a35d8" stroke-width="1.4"/>
<path d="M235.5 164H216L206 187" stroke="#1a35d8" stroke-width="1.4" fill="none"/>
<path d="M303 420.3H348.4M366.7 420.3H412M290.3 416V432M424.5 416V432" stroke="#f58a1f" stroke-width="1.4"/>
<path d="M290.3 420.3L303.2 413.6V427Z M424.5 420.3L411.8 413.6V427Z" fill="#f58a1f"/>
<text x="358" y="427.3" font-size="17.6" text-anchor="middle" fill="#f58a1f">?</text>
<text x="320" y="75.4" font-size="21" fill="#1c8a1c" textLength="97.5" lengthAdjust="spacingAndGlyphs">D = 120 in</text>
<path d="M328 62Q350 66 372 63" stroke="#555" stroke-width="0.8" fill="none"/>
<text x="213" y="63" font-size="21" fill="#1c8a1c">2 '</text>
<text x="458" y="63" font-size="21" fill="#1c8a1c">2 '</text>
<text x="305" y="121" font-size="17" font-weight="bold" fill="#111" textLength="82.0" lengthAdjust="spacingAndGlyphs">RECEPTION</text><text x="396" y="121" font-size="17" font-weight="bold" fill="#111" textLength="23.5" lengthAdjust="spacingAndGlyphs">255</text>
<text x="578" y="225.4" font-size="17" font-weight="bold" fill="#111" textLength="58.5" lengthAdjust="spacingAndGlyphs">SERVER</text><text x="645.4" y="225.4" font-size="17" font-weight="bold" fill="#111" textLength="22.6" lengthAdjust="spacingAndGlyphs">257</text>
<text x="321" y="374.6" font-size="17" font-weight="bold" fill="#111" textLength="48.4" lengthAdjust="spacingAndGlyphs">LOBBY</text><text x="379.3" y="374.6" font-size="17" font-weight="bold" fill="#111" textLength="23.7" lengthAdjust="spacingAndGlyphs">256</text>
<text x="614.5" y="416.4" font-size="17" font-weight="bold" fill="#111" textLength="108.5" lengthAdjust="spacingAndGlyphs">STORAGE 258A</text>
<text x="622" y="542.5" font-size="17" font-weight="bold" fill="#111" textLength="101" lengthAdjust="spacingAndGlyphs">MEN'S RR  258</text>
<text transform="translate(845.8 337.7) rotate(-90)" font-size="17" font-weight="bold" fill="#111" textLength="69.5" lengthAdjust="spacingAndGlyphs">STORAGE</text><text transform="translate(845.8 259) rotate(-90)" font-size="17" font-weight="bold" fill="#111" textLength="23" lengthAdjust="spacingAndGlyphs">260</text>
<text x="237.3" y="158.7" font-size="18" fill="#111" textLength="137.3" lengthAdjust="spacingAndGlyphs">Verify all ducting</text>
<text x="237.3" y="180.2" font-size="18" fill="#111" textLength="154.7" lengthAdjust="spacingAndGlyphs">will fit in this chase</text>
<text x="573.2" y="96.6" font-size="18" fill="#111" textLength="141.8" lengthAdjust="spacingAndGlyphs">Provide enlarged</text>
<text x="573.2" y="118.1" font-size="18" fill="#111" textLength="119.2" lengthAdjust="spacingAndGlyphs">plan for equip.</text>
<text x="573.2" y="139.6" font-size="18" fill="#111" textLength="50.1" lengthAdjust="spacingAndGlyphs">layout</text>
<circle cx="746.6" cy="54.7" r="11" fill="none" stroke="#333" stroke-width="0.9"/>
<path d="M795 59.5H860V65L795 60Z" fill="#000"/><path d="M815 61.2L826 62M834 62.4L845 63.2M851 63.6L858 64" stroke="#e8e8e8" stroke-width="1.2"/>
<path d="M103.5 135.5H401.5M401.5 135.5V459.5M103.5 459.5H401.5M103.5 135.5V459.5" stroke="#4d86c0" stroke-width="0.8" stroke-dasharray="2.5 2" fill="none"/>
<path d="M300.5 119V135M162.5 160V200M201.5 200V438M124 438.5H201.5M124.5 300V438" stroke="#4d86c0" stroke-width="0.8" stroke-dasharray="1.5 2" fill="none" opacity="0.8"/>
<rect x="101.0" y="133.0" width="5" height="5" fill="#3f7fc0" stroke="#2a5d96" stroke-width="0.8"/>
<rect x="399.0" y="133.0" width="5" height="5" fill="#3f7fc0" stroke="#2a5d96" stroke-width="0.8"/>
<rect x="399.0" y="457.0" width="5" height="5" fill="#3f7fc0" stroke="#2a5d96" stroke-width="0.8"/>
<rect x="101.0" y="457.0" width="5" height="5" fill="#3f7fc0" stroke="#2a5d96" stroke-width="0.8"/>
<circle cx="300" cy="118.7" r="3" fill="#3f7fc0" stroke="#2a5d96" stroke-width="0.6"/>
<circle cx="162.5" cy="159.5" r="3" fill="#3f7fc0" stroke="#2a5d96" stroke-width="0.6"/>
<circle cx="235.5" cy="143" r="2.9" fill="#d8b83a" stroke="#8a7420" stroke-width="0.7"/>
<circle cx="235.5" cy="186" r="2.9" fill="#d8b83a" stroke="#8a7420" stroke-width="0.7"/>
<circle cx="216" cy="164" r="2.9" fill="#d8b83a" stroke="#8a7420" stroke-width="0.7"/>
<circle cx="394.6" cy="143" r="2.9" fill="#d8b83a" stroke="#8a7420" stroke-width="0.7"/>
<circle cx="394.6" cy="186" r="2.9" fill="#d8b83a" stroke="#8a7420" stroke-width="0.7"/>
<circle cx="201" cy="198" r="2.9" fill="#d8b83a" stroke="#8a7420" stroke-width="0.7"/>
<circle cx="124" cy="438.5" r="2.9" fill="#d8b83a" stroke="#8a7420" stroke-width="0.7"/>
<circle cx="201.6" cy="438.5" r="2.9" fill="#d8b83a" stroke="#8a7420" stroke-width="0.7"/>
<rect x="232.9" y="161.4" width="5.2" height="5.2" fill="#d8b83a" stroke="#8a7420" stroke-width="0.7"/>
<rect x="312.4" y="140.4" width="5.2" height="5.2" fill="#d8b83a" stroke="#8a7420" stroke-width="0.7"/>
<rect x="312.4" y="183.4" width="5.2" height="5.2" fill="#d8b83a" stroke="#8a7420" stroke-width="0.7"/>
<rect x="392.0" y="161.4" width="5.2" height="5.2" fill="#d8b83a" stroke="#8a7420" stroke-width="0.7"/></svg>
<div id="titlebar" class="abs">
<span class="lbl" style="left:1px;top:-4px;font-size:10.5px;color:#d8d8d8">Window</span>
<span class="lbl" style="left:60px;top:-4px;font-size:10.5px;color:#d8d8d8">Help</span>
<svg class="abs" style="left:716px;top:0" width="50" height="11" viewBox="0 0 50 11"><path d="M5 1.5H12" stroke="#bbb" stroke-width="1.2"/><path d="M36.5 0V6.5H42.5V0M44 0V4" stroke="#bbb" stroke-width="1" fill="none"/></svg>
</div>
<div id="tb1" class="abs">
<div class="box" style="left:-4px;width:40px"></div><div class="abs" style="left:5px;top:12px;width:12px;height:2px;background:#e0e0e0"></div><svg class="abs" style="left:25px;top:10px" width="9" height="5.5" viewBox="0 0 9 5.5"><path d="M1 1L4.5 4.5L8 1" fill="none" stroke="#ddd" stroke-width="1.2"/></svg>
<span class="lbl" style="left:43px;top:7px">Fill:</span>
<div class="box" style="left:60px;width:18px"></div><div class="abs" style="left:63.5px;top:7px;width:11px;height:11px;background:#7df0f5;border:1px solid #e8ffff"></div>
<div class="box" style="left:85px;width:42px"></div><div class="abs" style="left:95.5px;top:5px;width:1px;height:15px;background:#5a5a5a"></div><div class="abs" style="left:86px;top:12px;width:10px;height:1px;background:#5a5a5a"></div>
<svg class="abs" style="left:87px;top:5px" width="8" height="15" viewBox="0 0 8 15"><path d="M1.5 5L4 2.5L6.5 5M1.5 10L4 12.5L6.5 10" fill="none" stroke="#ddd" stroke-width="1"/></svg>
<span class="lbl" style="left:105px;top:7px">40%</span>
<span class="lbl" style="left:134px;top:7px">Font:</span>
<div class="box" style="left:157px;width:105px"></div><span class="lbl" style="left:162px;top:7px">Helvetica</span><svg class="abs" style="left:250px;top:10px" width="9" height="5.5" viewBox="0 0 9 5.5"><path d="M1 1L4.5 4.5L8 1" fill="none" stroke="#ddd" stroke-width="1.2"/></svg>
<div class="box" style="left:269px;width:35px"></div><div class="abs" style="left:290px;top:5px;width:1px;height:15px;background:#5a5a5a"></div><span class="lbl" style="left:273.5px;top:7px">14</span><svg class="abs" style="left:293px;top:10px" width="9" height="5.5" viewBox="0 0 9 5.5"><path d="M1 1L4.5 4.5L8 1" fill="none" stroke="#ddd" stroke-width="1.2"/></svg>
<div class="box" style="left:311px;width:18px"></div>
<svg class="abs" style="left:312px;top:5px" width="16" height="15" viewBox="0 0 16 15"><path d="M1.5 4V1.5H4M12 1.5H14.5V4M14.5 11V13.5H12M4 13.5H1.5V11" fill="none" stroke="#eee" stroke-width="1.1"/></svg>
<span class="lbl" style="left:316.3px;top:6.5px;font-size:10.5px;font-weight:bold;color:#fff">A</span>
<div class="box" style="left:335px;width:18px"></div><div class="abs" style="left:339px;top:7.5px;width:10.5px;height:10.5px;background:#000;border:1.3px solid #f2f2f2"></div>
<div class="box" style="left:359px;width:43px"></div><span class="lbl" style="left:366px;top:7px">Style</span><svg class="abs" style="left:391px;top:10px" width="9" height="5.5" viewBox="0 0 9 5.5"><path d="M1 1L4.5 4.5L8 1" fill="none" stroke="#ddd" stroke-width="1.2"/></svg>
</div><div id="tbline" class="abs"></div><div id="tb2" class="abs"></div>
<div id="nav" class="abs">
<div class="abs" style="left:15.5px;top:0;width:24.5px;height:25px;background:#1d659b"></div>
<svg class="abs" style="left:0;top:0" width="780" height="25" viewBox="78 534 780 25" fill="none" stroke="#e4e4e4" stroke-width="1.1"><path d="M102.6 552.6C101.3 550.6 99.6 548.8 99.7 547.4C99.8 546.3 101 546.2 101.7 547.1L103 548.8L102.2 543.9C102 542.8 103.5 542.5 103.8 543.6L104.7 547.2L104.9 542.4C105 541.3 106.6 541.3 106.7 542.4L106.8 547.1L107.7 542.9C107.9 541.9 109.4 542.2 109.3 543.2L108.8 547.5L110.1 544.9C110.6 544 111.9 544.6 111.6 545.6L110.4 549.6C110 551 109.5 551.8 109 552.6Z" stroke-width="1"/><path d="M128.2 540V551L130.9 548.6L132.8 553L134.3 552.3L132.5 548L136 547.6Z"/><path d="M150.6 540.4C152 540.4 152.5 540.9 152.8 541.7C153.1 540.9 153.6 540.4 155 540.4M150.6 552.8C152 552.8 152.5 552.3 152.8 551.5C153.1 552.3 153.6 552.8 155 552.8M152.8 541.7V551.5" stroke-width="1"/><circle cx="180" cy="545" r="4.6"/><path d="M183.4 548.4L187.6 552.6" stroke-width="1.6"/><path d="M180 542.6V545.6M178.3 546.9H181.7" stroke-width="0.9"/><path d="M203.5 542.5V549.5M209 542.5L204.8 546L209 549.5Z" stroke="#555"/><path d="M233.5 543L229.5 546L233.5 549Z" stroke="#555"/><path d="M427 543L431.6 546L427 549Z"/><path d="M451 543L455.6 546L451 549ZM457.3 542.5V549.5"/><path d="M469 539.5V552.5" stroke="#666"/><circle cx="483.3" cy="546" r="6.2"/><path d="M485 543L481 546L485 549Z" stroke-width="0.9"/><circle cx="508.8" cy="546" r="6.2" stroke="#555"/><path d="M507.3 543L511.3 546L507.3 549Z" stroke="#555" stroke-width="0.9"/></svg>
<span class="lbl" style="left:77px;top:7.8px;font-size:7.6px;color:#e8e8e8">A</span>
<div class="abs" style="left:167px;top:4.5px;width:171.5px;height:15.5px;border:1px solid #666;border-radius:2px"></div>
<span class="lbl" style="left:179px;top:6.5px;font-size:8.6px;color:#f0f0f0;transform:scaleX(.932);transform-origin:0 0">A2.2.1 - LEVEL 02 FLOOR PLAN (1 of 3)</span>
<span class="lbl" style="left:649.5px;top:6.5px;font-size:9.3px;color:#e0e0e0;transform:scaleX(.93);transform-origin:0 0">42.00 x 30.00 in</span>
</div><div id="navline" class="abs"></div>
<div id="flt" class="abs">
<div class="abs" style="left:-10px;top:3px;width:59.5px;height:17.5px;border:1px solid #6a6a6a;border-radius:2px"></div>
<svg class="abs" style="left:0;top:0" width="780" height="24" viewBox="78 560 780 24" fill="none" stroke="#e4e4e4" stroke-width="1.1"><path d="M115 568L122.4 575.6M122.4 568L115 575.6" stroke-width="1.2"/><path d="M147.5 567.5H156.5L153.2 572V577L150.8 575.6V572Z" stroke-width="1"/><path d="M234.5 570.5H233V578.5H241V570.5H239.5M237 574.5V566.5M234.8 568.7L237 566.3L239.2 568.7" stroke-width="1"/></svg>
<span class="lbl" style="left:83.5px;top:6px;font-size:10px;font-weight:bold;color:#f2f2f2">Filter List</span>
</div>
<div id="tbl" class="abs"><div id="thead" class="abs"></div>
<div id="selrow" class="abs"></div>
<div class="vl" style="left:137px"></div>
<div class="vl" style="left:202px"></div>
<div class="vl" style="left:327.5px"></div>
<div class="vl" style="left:555px"></div>
<div class="vl" style="left:611px"></div>
<div class="vl" style="left:695px"></div>
<div class="vl" style="left:764.5px"></div>
<div class="hl" style="top:33px"></div>
<div class="hl" style="top:62px"></div>
<div class="hl" style="top:168.5px"></div>
<span class="th" style="left:143px">Author</span>
<span class="th" style="left:209px">Date</span>
<span class="th" style="left:334px">Status</span>
<span class="th" style="left:562px">Color</span>
<span class="th" style="left:618px">Layer</span>
<svg class="abs" style="left:536px;top:5px" width="14" height="14" viewBox="0 0 14 14" fill="none" stroke="#f0f0f0" stroke-width="1.1"><path d="M2.5 1.5V12.5M7 1.5V12.5M11.5 1.5V12.5"/><circle cx="2.5" cy="4.5" r="1.3" fill="#f0f0f0" stroke="none"/><circle cx="7" cy="9" r="1.3" fill="#f0f0f0" stroke="none"/><path d="M10 4L11.5 2L13 4" stroke-width="0.9"/></svg>
<span class="td" style="left:139px;top:48px">JLake</span>
<span class="td" style="left:204.5px;top:48px;transform:scaleX(.975)">11/18/2021 12:29:16 PM</span>
<div class="sq" style="top:49.5px;background:#fa0606"></div>
<span class="td tdr" style="right:735.5px;top:77.3px">quip. layout</span>
<span class="td" style="left:139px;top:77.3px">TDavis</span>
<span class="td" style="left:204.5px;top:77.3px;transform:scaleX(.975)">3/7/2018 5:25:03 PM</span>
<div class="sq" style="top:78.8px;background:#0a22f0"></div>
<span class="td tdr" style="right:743.5px;top:92.6px">this chase</span>
<span class="td" style="left:139px;top:92.6px">TDavis</span>
<span class="td" style="left:204.5px;top:92.6px;transform:scaleX(.975)">3/7/2018 5:25:01 PM</span>
<span class="td" style="left:330.5px;top:92.6px">Accepted set by JLake on 3/17/2022 at 3:51:06 PM</span>
<div class="sq" style="top:94.1px;background:#0a22f0"></div>
<span class="td" style="left:139px;top:107.9px">TDavis</span>
<span class="td" style="left:204.5px;top:107.9px;transform:scaleX(.975)">3/7/2018 5:24:56 PM</span>
<div class="sq" style="top:109.4px;background:#0a22f0"></div>
<span class="td tdr" style="right:686px;top:123.2px">nts for Open Office areas?</span>
<span class="td" style="left:139px;top:123.2px">TDavis</span>
<span class="td" style="left:204.5px;top:123.2px;transform:scaleX(.975)">3/7/2018 5:25:04 PM</span>
<div class="sq" style="top:124.7px;background:#0a22f0"></div>
<span class="td tdr" style="right:716.8px;top:138.5px">or meeting rooms</span>
<span class="td" style="left:139px;top:138.5px">TDavis</span>
<span class="td" style="left:204.5px;top:138.5px;transform:scaleX(.975)">3/7/2018 5:24:58 PM</span>
<div class="sq" style="top:140.0px;background:#0a22f0"></div>
<span class="td" style="left:139px;top:153.8px">TDavis</span>
<span class="td" style="left:204.5px;top:153.8px;transform:scaleX(.975)">3/7/2018 5:28:21 PM</span>
<div class="sq" style="top:155.3px;background:#0a22f0"></div>
</div>
<div id="status" class="abs">
<svg class="abs" style="left:0;top:0" width="780" height="17" viewBox="78 764 780 17" fill="none" stroke="#ececec" stroke-width="1.15"><path d="M446.7 770V781M452 770V781M443 773.5H455.5M443 777.6H455.5"/><path d="M470.7 770V781M475.6 770V779M468 773.5H480M468 777.6H476M477 779.5H481.5V776.5M479.8 777.8L481.5 776.2L483.2 777.8" /><path d="M495 770H501.5L504.7 773.2V781H495ZM501.3 770V773.5H504.7M498.5 777.5H502.5V781M500.8 779L502.5 777.3"/><path d="M520.5 781L525.5 772L531 775.5L527.5 781M522.3 777.5L529 780.5"/><path d="M545 781L552.5 770L557.3 773.3L552 781M548.6 775.7L554.3 779"/><circle cx="554.6" cy="779.6" r="1.8" fill="#2f86e0" stroke="none"/><path d="M569.8 781V769.8H580.7V781M572.5 774H578M576.5 772.5L578 774L576.5 775.5M578 778H572.5M574 776.5L572.5 778L574 779.5"/><path d="M589.7 775.5L592.9 778.7L596 775.5" stroke="#bbb"/></svg>
<span class="lbl" style="left:540.5px;top:5.5px;font-size:9.3px;color:#e0e0e0;transform:scaleX(.93);transform-origin:0 0">3.75 in = 30'-0"</span>
<span class="lbl" style="left:619px;top:5.5px;font-size:9.3px;color:#e0e0e0;transform:scaleX(.93);transform-origin:0 0">42.00 x 30.00 in</span>
<span class="lbl" style="left:723px;top:5.5px;font-size:9.3px;color:#e0e0e0;transform:scaleX(.93);transform-origin:0 0">(17.50, 15.97)</span>
</div>
</div></div>
<div class="card" style="left:12px;top:159px">
<svg class="abs" style="left:0;top:0;font-family:'Liberation Sans',sans-serif" width="150" height="150" viewBox="12 159 150 150"><g transform="translate(0 251.8) scale(1 1.07)"><text x="48.5" y="0" font-size="49" fill="#fff">A</text><text x="95" y="0" font-size="49" fill="#fff">B</text></g><path d="M89.8 198V269.5" stroke="#fff" stroke-width="3.2"/><path d="M74 198H88.3M91.3 198H104.2M74 269.5H88.3M91.3 269.5H104.2" stroke="#fff" stroke-width="4"/></svg></div>
<div class="card" style="left:770.3px;top:507.5px">
<svg class="abs" style="left:0;top:0" width="150" height="150" viewBox="770.3 507.5 150 150" fill="none" stroke="#fff" stroke-width="4.2"><path d="M802 551.2H888M812.7 540.3V624.7"/><path d="M829.7 540.3V551M847 540.3V551M864.5 540.3V551M882 540.3V551"/><path d="M802 568.6H812M802 585.2H812M802 602H812M802 618.6H812"/><path d="M834 570V612M847 570V612M860 570V612M872.8 570V612" stroke-width="4.5"/><path d="M820.5 605.8L887 576.8" stroke-width="4"/></svg></div>
</body></html>
